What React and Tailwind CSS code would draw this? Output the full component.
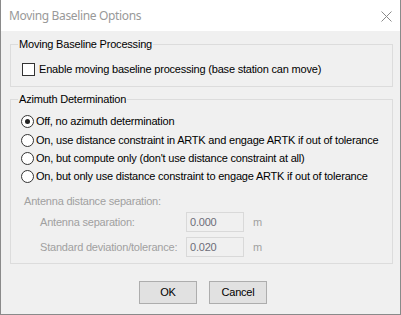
import React, { useState } from "react";

const sans = { fontFamily: '"Liberation Sans", Arial, sans-serif' };

const Radio = ({ checked, label, onSelect }) => (
  <div className="flex items-center h-[18px] gap-[2px] cursor-default" onClick={onSelect}>
    <span className="w-[13px] h-[13px] rounded-full border border-[#333] bg-white flex items-center justify-center shrink-0">
      {checked && <span className="w-[5px] h-[5px] rounded-full bg-[#222]" />}
    </span>
    <span className="whitespace-nowrap">{label}</span>
  </div>
);

const Field = ({ label, value }) => (
  <div className="flex items-center h-[20px]">
    <span className="w-[162px] pl-[16px] text-[#a0a0a0]">{label}</span>
    <div className="w-[58px] h-[20px] border border-[#d9d9d9] bg-[#f0f0f0] pl-[3px] flex items-center text-[#6d6d78]">
      {value}
    </div>
    <span className="ml-[9px] text-[#a0a0a0]">m</span>
  </div>
);

const App = () => {
  const [moving, setMoving] = useState(false);
  const [mode, setMode] = useState(0); // 0 = off

  const options = [
    "Off, no azimuth determination",
    "On, use distance constraint in ARTK and engage ARTK if out of tolerance",
    "On, but compute only (don't use distance constraint at all)",
    "On, but only use distance constraint to engage ARTK if out of tolerance",
  ];

  return (
    <div className="w-[401px] h-[315px] flex flex-col border-x border-b border-[#8a8a8a] bg-[#f0f0f0] text-[11px] leading-[13px] tracking-[-0.2px] text-black overflow-hidden" style={sans}>
      {/* title bar */}
      <div className="h-[31px] bg-white flex items-center justify-between pl-[8px] pr-[8px] shrink-0">
        <span className="text-[12px] tracking-[-0.35px] text-[#999]" style={{ fontFamily: '"Noto Sans", sans-serif' }}>
          Moving Baseline Options
        </span>
        <svg width="11" height="11" viewBox="0 0 11 11" className="mt-[1px]">
          <path d="M0.5 0.5 L10.5 10.5 M10.5 0.5 L0.5 10.5" stroke="#8a8a8a" strokeWidth="1" fill="none" />
        </svg>
      </div>

      <div className="flex-1 flex flex-col">
        <fieldset className="mt-[7px] ml-[9px] w-[383px] border border-[#dcdcdc] pl-[11px] pb-[10px]">
          <legend className="-ml-[4px] px-[1px]">Moving Baseline Processing</legend>
          <label className="mt-[12px] flex items-center gap-[4px] h-[13px]" onClick={() => setMoving(!moving)}>
            <span className="w-[13px] h-[13px] border border-[#333] bg-white flex items-center justify-center text-[10px]">
              {moving ? "✓" : ""}
            </span>
            <span className="whitespace-nowrap">Enable moving baseline processing (base station can move)</span>
          </label>
        </fieldset>

        <fieldset className="mt-[6px] ml-[9px] w-[383px] border border-[#dcdcdc] pl-[10px] pb-[6px] overflow-hidden">
          <legend className="-ml-[3px] px-[1px]">Azimuth Determination</legend>
          <div className="mt-[6px] flex flex-col">
            {options.map((o, i) => (
              <div key={i} className={i === 0 ? "mb-[1px]" : ""}>
                <Radio checked={mode === i} label={o} onSelect={() => setMode(i)} />
              </div>
            ))}
          </div>
          <div className="mt-[10px] pl-[3px] text-[#a0a0a0]">Antenna distance separation:</div>
          <div className="mt-[4px] pl-[3px] flex flex-col gap-[5px]">
            <Field label="Antenna separation:" value="0.000" />
            <Field label="Standard deviation/tolerance:" value="0.020" />
          </div>
        </fieldset>

        <div className="mt-[17px] pl-[138px] flex gap-[12px]">
          <button className="w-[58px] h-[23px] border border-[#adadad] bg-[#e1e1e1]">OK</button>
          <button className="w-[58px] h-[23px] border border-[#adadad] bg-[#e1e1e1]">Cancel</button>
        </div>
      </div>
    </div>
  );
};

export default App;
